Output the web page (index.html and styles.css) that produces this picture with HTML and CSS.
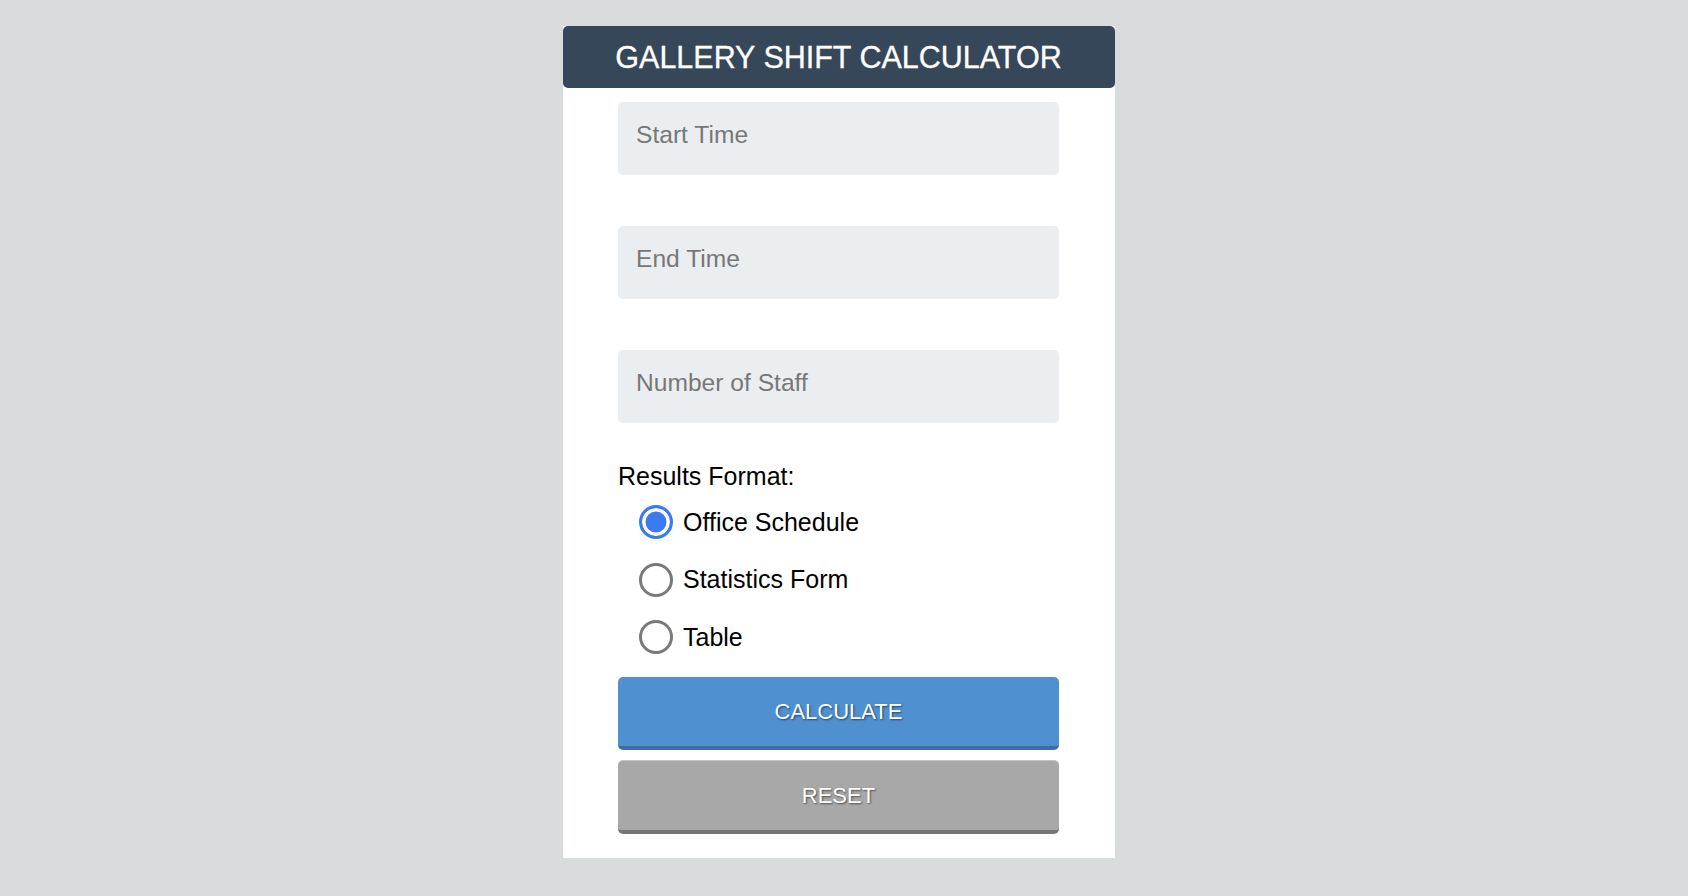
FILE: index.html
```html
<!DOCTYPE html>
<html lang="en">
<head>
<meta charset="utf-8">
<title>Gallery Shift Calculator</title>
<link rel="stylesheet" href="styles.css">
</head>
<body>
<div class="card">
  <h1 class="header">GALLERY SHIFT CALCULATOR</h1>
  <form class="form">
    <input class="field" type="text" placeholder="Start Time">
    <input class="field" type="text" placeholder="End Time">
    <input class="field" type="text" placeholder="Number of Staff">
    <div class="group-label">Results Format:</div>
    <div class="options">
      <label class="option"><input class="radio" type="radio" name="fmt" checked><span>Office Schedule</span></label>
      <label class="option"><input class="radio" type="radio" name="fmt"><span>Statistics Form</span></label>
      <label class="option"><input class="radio" type="radio" name="fmt"><span>Table</span></label>
    </div>
    <button type="button" class="btn btn-calc">CALCULATE</button>
    <button type="button" class="btn btn-reset">RESET</button>
  </form>
</div>
</body>
</html>
```
FILE: styles.css
```css
* { box-sizing: border-box; }
html, body {
  margin: 0;
  padding: 0;
  background: #d8dcdd;
  font-family: "Liberation Sans", Arial, Helvetica, sans-serif;
}
body {
  padding-top: 26px;
  padding-right: 11px;
}
.card {
  width: 552px;
  margin: 0 auto;
  background: #ffffff;
  padding-bottom: 24px;
}
.header {
  margin: 0;
  height: 62px;
  background: #37475a;
  border-radius: 5px;
  color: #ffffff;
  font-size: 30.5px;
  font-weight: normal;
  display: flex;
  align-items: center;
  justify-content: center;
  -webkit-text-stroke: 0.3px #ffffff;
}
.form {
  width: 441px;
  margin: 0 auto;
  display: flex;
  flex-direction: column;
}
.field {
  display: block;
  width: 100%;
  height: 73px;
  margin: 14px 0 0;
  border: none;
  border-radius: 5px;
  background: #ebeef0;
  padding: 0 18px 8px;
  font-family: inherit;
  font-size: 24.6px;
  color: #333;
  outline: none;
}
.field + .field { margin-top: 51px; }
.field::placeholder { color: #777777; }
.group-label {
  margin-top: 37.5px;
  font-size: 25px;
  line-height: 30px;
  color: #000;
}
.options {
  display: flex;
  flex-direction: column;
  gap: 21.5px;
  margin-top: 13.5px;
  padding-left: 21px;
}
.option {
  display: flex;
  align-items: center;
  gap: 10px;
  height: 36px;
  font-size: 25px;
  color: #000;
}
.radio {
  appearance: none;
  -webkit-appearance: none;
  margin: 0;
  width: 34px;
  height: 34px;
  border-radius: 50%;
  border: 3px solid #7a7a7a;
  background: #ffffff;
  flex: none;
}
.radio:checked {
  border: 3px solid #3a7af3;
  background: #3a7af3;
  box-shadow: inset 0 0 0 3.5px #ffffff;
}
.btn {
  display: block;
  width: 100%;
  height: 73px;
  border: none;
  border-radius: 5px;
  color: #ffffff;
  font-family: inherit;
  font-size: 22px;
  text-shadow: 1px 1px 2px rgba(0, 0, 0, 0.55);
  cursor: pointer;
}
.btn-calc {
  margin-top: 22px;
  background: #4f91d0;
  border-bottom: 4px solid #3d6ea0;
}
.btn-reset {
  margin-top: 10px;
  height: 74px;
  background: #a8a8a8;
  border-top: 1px solid #c4c4c4;
  border-bottom: 4px solid #767676;
}
```
